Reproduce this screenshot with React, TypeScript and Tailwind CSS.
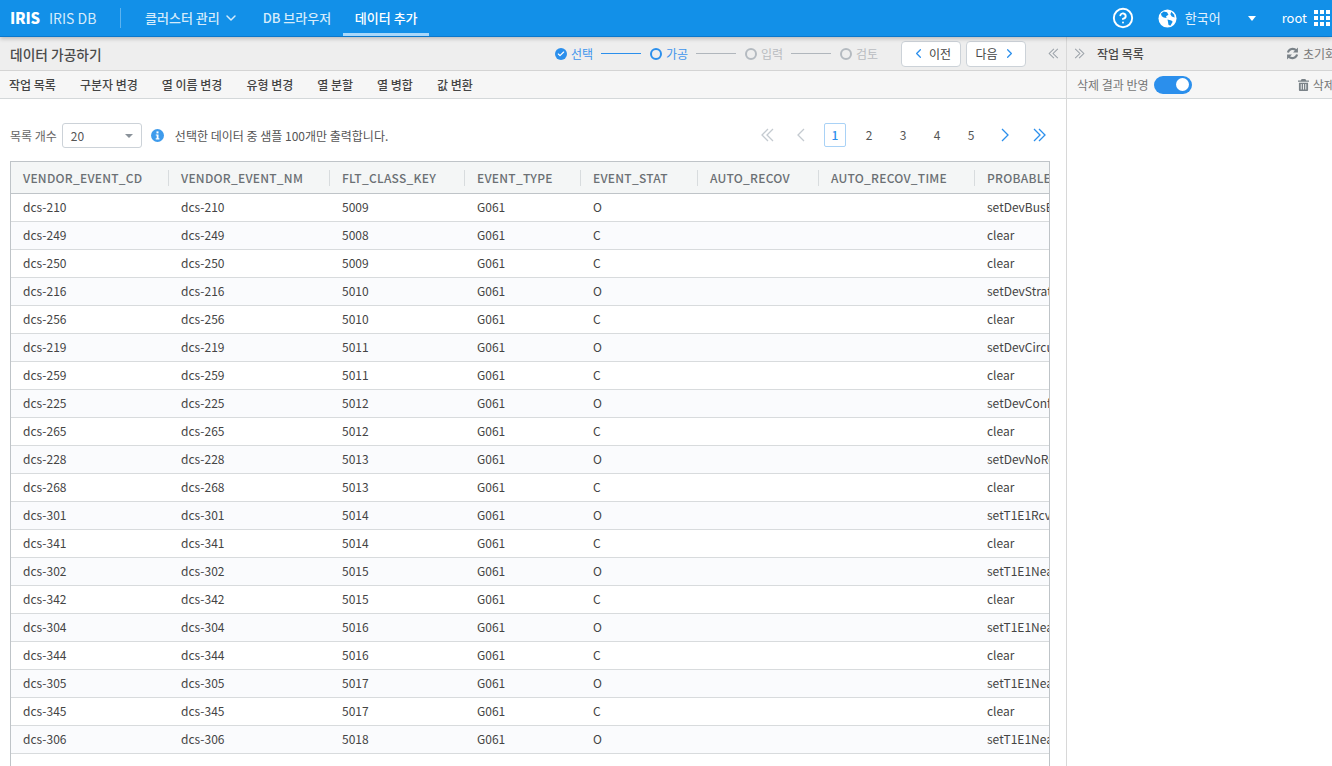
import { Check, ChevronDown, ChevronLeft, ChevronRight, CircleHelp } from 'lucide-react';

const FONT = "font-['Noto_Sans_CJK_KR','Noto_Sans',sans-serif]";

const columns = [
  { name: 'VENDOR_EVENT_CD', width: 'w-[158px]' },
  { name: 'VENDOR_EVENT_NM', width: 'w-[161px]' },
  { name: 'FLT_CLASS_KEY', width: 'w-[135px]' },
  { name: 'EVENT_TYPE', width: 'w-[116px]' },
  { name: 'EVENT_STAT', width: 'w-[117px]' },
  { name: 'AUTO_RECOV', width: 'w-[121px]' },
  { name: 'AUTO_RECOV_TIME', width: 'w-[156px]' },
  { name: 'PROBABLE_CAUSE', width: 'w-[74px]' },
];

const rows = [
  ['dcs-210', '5009', 'O', 'setDevBusError'],
  ['dcs-249', '5008', 'C', 'clear'],
  ['dcs-250', '5009', 'C', 'clear'],
  ['dcs-216', '5010', 'O', 'setDevStratum'],
  ['dcs-256', '5010', 'C', 'clear'],
  ['dcs-219', '5011', 'O', 'setDevCircuit'],
  ['dcs-259', '5011', 'C', 'clear'],
  ['dcs-225', '5012', 'O', 'setDevConfig'],
  ['dcs-265', '5012', 'C', 'clear'],
  ['dcs-228', '5013', 'O', 'setDevNoResp'],
  ['dcs-268', '5013', 'C', 'clear'],
  ['dcs-301', '5014', 'O', 'setT1E1RcvAlarm'],
  ['dcs-341', '5014', 'C', 'clear'],
  ['dcs-302', '5015', 'O', 'setT1E1NearEnd'],
  ['dcs-342', '5015', 'C', 'clear'],
  ['dcs-304', '5016', 'O', 'setT1E1NearEnd'],
  ['dcs-344', '5016', 'C', 'clear'],
  ['dcs-305', '5017', 'O', 'setT1E1NearEnd'],
  ['dcs-345', '5017', 'C', 'clear'],
  ['dcs-306', '5018', 'O', 'setT1E1NearEnd'],
];

const tools = ['작업 목록', '구분자 변경', '열 이름 변경', '유형 변경', '열 분할', '열 병합', '값 변환'];

function Globe() {
  return (
    <svg viewBox="0 0 20 20" className="w-[19px] h-[19px]">
      <circle cx="10" cy="10" r="9.5" fill="#fff" />
      <path d="M6 2.5 9.5 3.5 11 6 8.5 7.5 9 9.5 6 9 4 7.5 3 5ZM10 11l4 1 1.5 1.5-2.5 4-2-1-.5-3ZM14 3l3 3 .5 3-3-1-1.5-2.5Z" fill="#1290e8" />
    </svg>
  );
}

// angle glyphs of the pager and the panel collapse buttons
function Angles({ dir, double, className }: { dir: 'left' | 'right'; double?: boolean; className: string }) {
  const first = dir === 'right' ? '1,1 7,7 1,13' : '7,1 1,7 7,13';
  const second = dir === 'right' ? '6,1 12,7 6,13' : '12,1 6,7 12,13';
  return (
    <svg viewBox={double ? '0 0 13 14' : '0 0 8 14'} fill="none" stroke="currentColor" strokeWidth="1.3" className={className}>
      <polyline points={first} />
      {double && <polyline points={second} />}
    </svg>
  );
}

function Step({ label, state, line }: { label: string; state: 'done' | 'active' | 'todo'; line?: boolean }) {
  const text = state === 'todo' ? 'text-[#b9bcc0]' : 'text-[#3e95ec]';
  return (
    <div className="flex items-center">
      {state === 'done' ? (
        <span className="w-3 h-3 rounded-full bg-[#2b8fec] flex items-center justify-center">
          <Check size={8} strokeWidth={3.5} className="text-white" />
        </span>
      ) : (
        <span className={`w-3 h-3 rounded-full border-2 ${state === 'active' ? 'border-[#2b8fec]' : 'border-[#b4bac0]'}`} />
      )}
      <span className={`ml-1 text-xs w-[22px] whitespace-nowrap ${text}`}>{label}</span>
      {line && <span className={`ml-2 w-10 h-px ${state === 'done' ? 'bg-[#2b8fec]' : 'bg-[#b0b6bc]'}`} />}
      {line && <span className="w-[9px]" />}
    </div>
  );
}

export default function App() {
  return (
    <div className={`${FONT} w-[1332px] h-[766px] overflow-hidden bg-white text-[#444] flex flex-col`}>
      <header className="h-[37px] shrink-0 bg-[#1290e8] border-b border-[#0b78cc] flex items-center text-white shadow-[0_2px_4px_rgba(0,0,0,0.2)] relative z-10">
        <span className="ml-[10px] text-[15px] font-black tracking-[-0.2px] w-[39px]">IRIS</span>
        <span className="text-[14px] text-[#d5ebfb] w-[71px]">IRIS DB</span>
        <span className="w-px h-[20px] bg-[#5db3ef]" />
        <nav className="flex h-full items-center ml-[24px] text-[13px] font-medium">
          <span className="flex items-center text-[#d5ebfb]">
            클러스터 관리
            <ChevronDown size={16} strokeWidth={2.2} className="ml-[3px]" />
          </span>
          <span className="ml-[24px] text-[#d5ebfb]">DB 브라우저</span>
          <span className="ml-[12px] w-[86px] h-full flex items-center justify-center border-b-[3px] border-[#a9d8fa] pt-[2px]">데이터 추가</span>
        </nav>
        <div className="ml-auto flex items-center">
          <CircleHelp size={22} strokeWidth={2.1} />
          <span className="ml-[24px]"><Globe /></span>
          <span className="ml-[8px] text-[13px] text-[#e6f3fd]">한국어</span>
          <span className="ml-[27px] w-0 h-0 border-x-[4.5px] border-x-transparent border-t-[5px] border-t-white" />
          <span className="ml-[26px] text-[13px]">root</span>
          <div className="ml-[7px] mr-[2px] grid grid-cols-3 gap-[2px]">
            {Array.from({ length: 9 }).map((_, i) => (
              <span key={i} className="w-[4px] h-[4px] bg-white" />
            ))}
          </div>
        </div>
      </header>

      <div className="flex flex-1 min-h-0">
        <main className="w-[1067px] shrink-0 border-r border-[#d8d8d8] flex flex-col">
          <div className="h-[34px] bg-[#eeeeee] border-b border-[#d4d4d4] flex items-center pl-[10px] relative">
            <h1 className="text-[13.75px] font-medium text-[#4a4a4a] w-[93px] pt-[1px] whitespace-nowrap">데이터 가공하기</h1>
            <div className="ml-[452px] flex items-center">
              <Step label="선택" state="done" line />
              <Step label="가공" state="active" line />
              <Step label="입력" state="todo" line />
              <Step label="검토" state="todo" />
            </div>
            <button className="ml-[23px] w-[60px] h-[26px] bg-white border border-[#ccd2d8] rounded-[4px] flex items-center justify-center text-xs text-[#444]">
              <ChevronLeft size={15} strokeWidth={2} className="text-[#2b8fec] mr-[3px]" />이전
            </button>
            <button className="ml-[5px] w-[60px] h-[26px] bg-white border border-[#ccd2d8] rounded-[4px] flex items-center justify-center text-xs text-[#444]">
              다음<ChevronRight size={15} strokeWidth={2} className="text-[#2b8fec] ml-[4px]" />
            </button>
            <Angles dir="left" double className="ml-[22px] w-[11px] h-[11px] text-[#9aa1a8]" />
          </div>
          <div className="h-[28px] bg-[#f6f6f6] border-b border-[#d4d8da] flex items-center pl-[9px] gap-[24px] text-xs font-medium text-[#444]">
            {tools.map((t) => (
              <span key={t}>{t}</span>
            ))}
          </div>

          <div className="h-[62px] shrink-0 flex items-center pt-[11px] pl-[10px] pr-[10px] text-xs">
            <span className="text-[#666] pt-[1px]">목록 개수</span>
            <div className="ml-[5px] w-[80px] h-[25px] border border-[#ccd2d8] rounded-[3px] flex items-center justify-between pl-[8px] pr-[8px] text-xs text-[#555]">
              20
              <span className="w-0 h-0 border-x-[4px] border-x-transparent border-t-[4px] border-t-[#8a929a]" />
            </div>
            <svg viewBox="0 0 13 13" className="ml-[9px] w-[13px] h-[13px]">
              <circle cx="6.5" cy="6.5" r="6.5" fill="#3e9bec" />
              <rect x="5.5" y="2.4" width="2" height="2" fill="#fff" />
              <path d="M4.8 5.4h2.7v3.8h.9v1.2H4.7V9.2h1V6.6h-.9Z" fill="#fff" />
            </svg>
            <span className="ml-[11px] text-[#555] pt-[1px]">선택한 데이터 중 샘플 100개만 출력합니다.</span>
            <div className="ml-auto mb-[1px] flex items-center text-xs text-[#555]">
              <span className="w-[34px] flex justify-center"><Angles dir="left" double className="w-[13px] h-[14px] text-[#c4cad0]" /></span>
              <span className="w-[34px] flex justify-center"><Angles dir="left" className="w-[8px] h-[14px] text-[#c4cad0]" /></span>
              <span className="mx-[6px] w-[22px] h-[24px] border border-[#a9d2f6] rounded-[2px] flex items-center justify-center text-[#2b8fec] font-medium">1</span>
              <span className="w-[34px] text-center">2</span>
              <span className="w-[34px] text-center">3</span>
              <span className="w-[34px] text-center">4</span>
              <span className="w-[34px] text-center">5</span>
              <span className="w-[34px] flex justify-center"><Angles dir="right" className="w-[8px] h-[14px] text-[#2b8fec]" /></span>
              <span className="w-[34px] flex justify-center"><Angles dir="right" double className="w-[13px] h-[14px] text-[#2b8fec]" /></span>
            </div>
          </div>

          <div className="ml-[10px] w-[1040px] border-x border-t border-[#bfc4c8] overflow-hidden flex-1">
            <div className="flex h-[32px] bg-[#f4f6f6] border-b border-[#bfc4c8] text-xs font-medium text-[#6b7074] tracking-[0.25px] overflow-hidden">
              {columns.map((c, i) => (
                <div key={c.name} className={`${c.width} shrink-0 flex items-center pl-[12px] pt-[1px] relative whitespace-nowrap overflow-hidden`}>
                  {c.name}
                  {i < columns.length - 1 && <span className="absolute right-0 top-[8px] h-[16px] w-px bg-[#d8dcde]" />}
                </div>
              ))}
            </div>
            {rows.map((r, i) => (
              <div key={i} className={`flex h-[28px] border-b border-[#d8dbdd] text-xs text-[#444] items-center pb-[2px] overflow-hidden ${i % 2 === 1 ? 'bg-[#fafbfd]' : 'bg-white'}`}>
                <div className="w-[158px] shrink-0 pl-[12px]">{r[0]}</div>
                <div className="w-[161px] shrink-0 pl-[12px]">{r[0]}</div>
                <div className="w-[135px] shrink-0 pl-[12px]">{r[1]}</div>
                <div className="w-[116px] shrink-0 pl-[12px]">G061</div>
                <div className="w-[117px] shrink-0 pl-[12px]">{r[2]}</div>
                <div className="w-[121px] shrink-0" />
                <div className="w-[156px] shrink-0" />
                <div className="w-[74px] shrink-0 pl-[12px] whitespace-nowrap overflow-hidden">{r[3]}</div>
              </div>
            ))}
          </div>
        </main>

        <aside className="flex-1 min-w-0 overflow-hidden flex flex-col">
          <div className="h-[34px] bg-[#eeeeee] border-b border-[#d4d4d4] flex items-center pl-[7px] whitespace-nowrap">
            <Angles dir="right" double className="w-[11px] h-[11px] shrink-0 text-[#9aa1a8]" />
            <span className="ml-[12px] text-xs font-medium text-[#4a4a4a]">작업 목록</span>
            <svg viewBox="0 0 24 24" className="ml-[142px] w-[13px] h-[13px] shrink-0 text-[#7a8288]" fill="none" stroke="currentColor" strokeWidth="4">
              <path d="M3.5 10A9 9 0 0 1 19 6.5" />
              <path d="M20.5 14A9 9 0 0 1 5 17.5" />
              <path d="M22 1v9h-9Z M2 23v-9h9Z" fill="currentColor" stroke="none" />
            </svg>
            <span className="ml-[4px] text-xs text-[#777]">초기화</span>
          </div>
          <div className="h-[28px] bg-[#f6f6f6] border-b border-[#d4d8da] flex items-center pl-[10px] whitespace-nowrap text-xs text-[#777]">
            삭제 결과 반영
            <span className="ml-[5px] w-[38px] h-[18px] shrink-0 rounded-full bg-[#2b8fec] flex items-center justify-end pr-[3px]">
              <span className="w-[13px] h-[13px] rounded-full bg-white" />
            </span>
            <svg viewBox="0 0 12 13" className="ml-[106px] w-[11px] h-[12px] shrink-0 text-[#7a8288]" fill="currentColor">
              <path d="M4 0h4l1 1.5h3V3H0V1.5h3ZM1 4h10v8a1 1 0 0 1-1 1H2a1 1 0 0 1-1-1ZM3 5.5V11.5h1V5.5ZM5.5 5.5V11.5h1V5.5ZM8 5.5V11.5h1V5.5Z" fillRule="evenodd" />
            </svg>
            <span className="ml-[4px]">삭제</span>
          </div>
        </aside>
      </div>
    </div>
  );
}
